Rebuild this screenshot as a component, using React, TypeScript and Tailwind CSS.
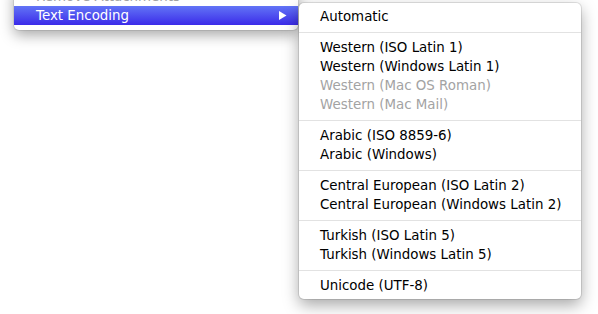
const groups: { label: string; disabled?: boolean }[][] = [
  [{ label: "Automatic" }],
  [
    { label: "Western (ISO Latin 1)" },
    { label: "Western (Windows Latin 1)" },
    { label: "Western (Mac OS Roman)", disabled: true },
    { label: "Western (Mac Mail)", disabled: true },
  ],
  [{ label: "Arabic (ISO 8859-6)" }, { label: "Arabic (Windows)" }],
  [
    { label: "Central European (ISO Latin 2)" },
    { label: "Central European (Windows Latin 2)" },
  ],
  [{ label: "Turkish (ISO Latin 5)" }, { label: "Turkish (Windows Latin 5)" }],
  [{ label: "Unicode (UTF-8)" }],
]

function Row({ label, disabled }: { label: string; disabled?: boolean }) {
  return (
    <div
      className={`h-[19px] flex items-center pl-[21px] whitespace-nowrap ${
        disabled ? "text-[#a3a3a3]" : "text-black"
      }`}
    >
      {label}
    </div>
  )
}

export default function App() {
  return (
    <div
      className="w-[598px] h-[314px] overflow-hidden bg-white text-[13.4px] leading-none"
      style={{ fontFamily: '"DejaVu Sans", "Liberation Sans", sans-serif' }}
    >
      <div className="flex items-start">
        {/* parent menu, scrolled off the top */}
        <div className="ml-[14px] mt-[-13px] w-[284px] bg-white rounded-b-[5px] pb-[5px] shadow-[0_5px_14px_rgba(0,0,0,0.35),0_0_0_1px_rgba(0,0,0,0.08)]">
          <div className="h-[19px] flex items-center pl-[22px] text-[#a3a3a3] whitespace-nowrap">
            Remove Attachments
          </div>
          <div className="h-[19px] flex items-center justify-between pl-[22px] pr-[11px] text-white bg-[linear-gradient(#6274f6,#3b2be9)]">
            <span>Text Encoding</span>
            <svg width="8" height="9" viewBox="0 0 8 9">
              <path d="M0 0 L7.5 4.5 L0 9 Z" fill="white" />
            </svg>
          </div>
        </div>

        {/* submenu */}
        <div className="ml-px mt-[3px] w-[282px] bg-white rounded-[5px] py-[4px] shadow-[0_6px_16px_rgba(0,0,0,0.35),0_0_0_1px_rgba(0,0,0,0.1)]">
          {groups.map((g, i) => (
            <div key={i}>
              {i > 0 && (
                <div className="h-[12px] flex items-center">
                  <div className="w-full h-px bg-[#e2e2e2]" />
                </div>
              )}
              {g.map((item) => (
                <Row key={item.label} {...item} />
              ))}
            </div>
          ))}
        </div>
      </div>
    </div>
  )
}
